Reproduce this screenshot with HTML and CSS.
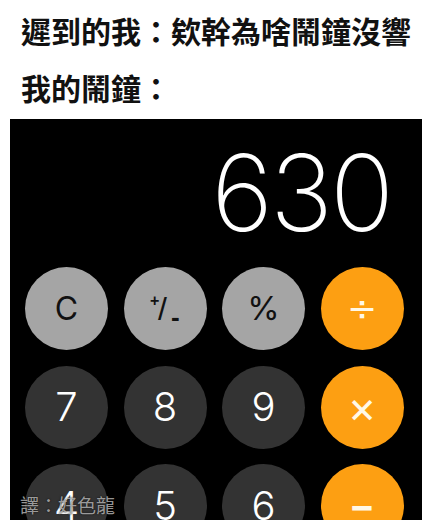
FILE: index.html
```html
<!DOCTYPE html>
<html lang="zh-Hant">
<head>
<meta charset="utf-8">
<title>鬧鐘</title>
<link rel="stylesheet" href="styles.css">
</head>
<body>
<div class="caption">
  <p class="line">遲到的我：欸幹為啥鬧鐘沒響</p>
  <p class="line">我的鬧鐘：</p>
</div>
<div class="calc">
  <div class="display">630</div>
  <div class="keys">
    <div class="key fn"><span class="c">C</span></div>
    <div class="key fn"><span class="pm"><span class="pm-plus">+</span><span class="pm-slash">/</span><span class="pm-minus">-</span></span></div>
    <div class="key fn"><span class="pct">%</span></div>
    <div class="key op"><span class="div">÷</span></div>
    <div class="key num">7</div>
    <div class="key num">8</div>
    <div class="key num">9</div>
    <div class="key op"><span class="mul">×</span></div>
    <div class="key num">4</div>
    <div class="key num">5</div>
    <div class="key num">6</div>
    <div class="key op"><span class="sub">−</span></div>
  </div>
  <div class="credit">譯：好色龍</div>
</div>
</body>
</html>
```
FILE: styles.css
```css
html, body {
  margin: 0;
  padding: 0;
  background: #fff;
}
body {
  width: 432px;
  height: 530px;
  overflow: hidden;
}
.caption {
  padding: 2px 0 0 21px;
  font-family: "Noto Sans CJK TC", "Noto Sans CJK SC", sans-serif;
  font-weight: 700;
  font-size: 30px;
  color: #111;
}
.line {
  margin: 0;
  line-height: 57px;
  height: 57px;
  white-space: nowrap;
}
.calc {
  position: relative;
  margin: 3px 10px 0;
  height: 401px;
  background: #000;
  overflow: hidden;
}
.display {
  height: 148px;
  line-height: 148px;
  text-align: right;
  padding-right: 31px;
  color: #fff;
  font-family: "Inter", "Roboto", sans-serif;
  font-weight: 250;
  font-size: 106px;
  letter-spacing: -3px;
}
.keys {
  display: grid;
  grid-template-columns: repeat(4, 83px);
  grid-auto-rows: 83px;
  column-gap: 15.5px;
  row-gap: 15.5px;
  padding-left: 15px;
}
.key {
  border-radius: 50%;
  display: flex;
  align-items: center;
  justify-content: center;
  font-family: "Liberation Sans", "Inter", sans-serif;
  line-height: 1;
}
.fn {
  background: #a5a5a5;
  color: #111;
}
.num {
  background: #333;
  color: #fff;
  font-family: "Inter", sans-serif;
  font-weight: 300;
  font-size: 40px;
}
.op {
  background: #fd9f12;
  color: #fff8e8;
}
.c {
  font-family: "Inter", sans-serif;
  font-weight: 400;
  font-size: 32px;
}
.pct {
  font-family: "Inter", sans-serif;
  font-weight: 400;
  font-size: 33px;
}
.pm {
  position: relative;
  display: block;
  width: 30px;
  height: 24px;
  font-family: "Liberation Sans", sans-serif;
  font-weight: 700;
}
.pm-plus {
  position: absolute;
  left: 0;
  top: -4px;
  font-size: 16px;
  line-height: 16px;
}
.pm-slash {
  position: absolute;
  left: 8px;
  top: -4px;
  font-size: 32px;
  line-height: 32px;
  font-weight: 400;
}
.pm-minus {
  position: absolute;
  left: 21px;
  top: 7px;
  font-size: 26px;
  line-height: 26px;
}
.div {
  font-family: "DejaVu Sans", sans-serif;
  font-size: 36px;
}
.mul {
  font-family: "Inter", sans-serif;
  font-weight: 400;
  font-size: 44px;
}
.sub {
  font-family: "Inter", sans-serif;
  font-weight: 600;
  font-size: 40px;
}
.credit {
  position: absolute;
  left: 10px;
  bottom: 6px;
  font-family: "Noto Sans CJK TC", sans-serif;
  font-size: 19px;
  font-weight: 400;
  color: rgba(190, 190, 190, 0.8);
  text-shadow: 0 0 2px rgba(0, 0, 0, 0.8);
  line-height: 1;
}
```
